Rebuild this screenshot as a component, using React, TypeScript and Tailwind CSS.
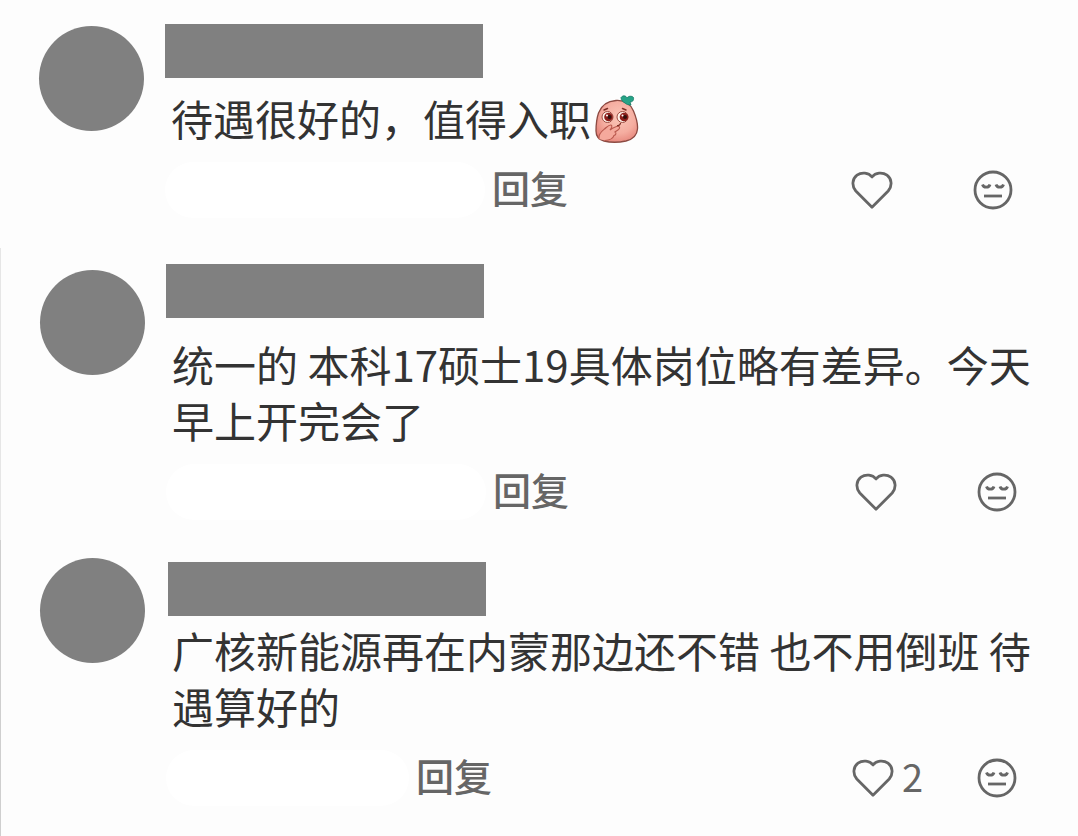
import { clsx } from "clsx";

type Comment = {
  id: number;
  text: string;
  sticker?: boolean;
  likes?: number;
  section: string;
  avatar: string;
  name: string;
  body: string;
  footer: string;
  meta: string;
  like: string;
};

const comments: Comment[] = [
  {
    id: 1,
    text: "待遇很好的，值得入职",
    sticker: true,
    section: "pt-6 pb-[30px]",
    avatar: "mt-0.5",
    name: "mt-0",
    body: "mt-3",
    footer: "mt-4 pr-7",
    meta: "w-[320px]",
    like: "w-[122px]",
  },
  {
    id: 2,
    text: "统一的 本科17硕士19具体岗位略有差异。今天早上开完会了",
    section: "border-l border-[#e6e6e6] pt-4 pb-5",
    avatar: "mt-1.5",
    name: "mt-0",
    body: "mt-[18px]",
    footer: "mt-4 pr-6",
    meta: "w-[320px]",
    like: "w-[122px]",
  },
  {
    id: 3,
    text: "广核新能源再在内蒙那边还不错 也不用倒班 待遇算好的",
    likes: 2,
    section: "border-l border-[#cfcfcf] pt-[18px] pb-[30px]",
    avatar: "mt-0",
    name: "mt-1 ml-0.5",
    body: "mt-1.5",
    footer: "mt-4 pr-6",
    meta: "w-[243px]",
    like: "w-[125px]",
  },
];

const HeartIcon = () => (
  <svg
    width="42"
    height="38"
    viewBox="0 0 42 38"
    fill="none"
    stroke="#666"
    strokeWidth="2.8"
    strokeLinejoin="round"
    aria-hidden="true"
  >
    <path d="M21 6C17.5 1.5 10.5 .9 6 4.2C1 8 .6 15.2 4.8 20L21 36.2L37.2 20C41.4 15.2 41 8 36 4.2C31.5 .9 24.5 1.5 21 6Z" />
  </svg>
);

const DislikeIcon = () => (
  <svg
    width="40"
    height="40"
    viewBox="0 0 40 40"
    fill="none"
    stroke="#666"
    strokeWidth="2.8"
    aria-hidden="true"
  >
    <circle cx="20" cy="20" r="18" />
    <path d="M9.5 14.5C10.5 18 16 18 17 14.5M23 14.5C24 18 29.5 18 30.5 14.5" />
    <path d="M11 26H29" />
  </svg>
);

// Sticker que acompaña al texto del comentario
const PeachSticker = () => (
  <svg
    className="ml-1 inline-block align-[-7px]"
    width="44"
    height="48"
    viewBox="0 0 44 48"
    role="img"
    aria-label="偷笑"
  >
    <defs>
      <radialGradient id="peach" cx="55%" cy="40%" r="65%">
        <stop offset="0" stopColor="#fac6b8" />
        <stop offset="0.6" stopColor="#f5ada0" />
        <stop offset="1" stopColor="#e58379" />
      </radialGradient>
    </defs>
    <path
      d="M21 5.5C29 5 35 8 38.5 16C41 22 43 28 42.5 34C42 41 37 44.500 31 46C24 47.500 15 47.500 9 46C3 44.500 1 41 1 36C1 30 1.500 24 3.500 18C6.500 10 13 6 21 5.500Z"
      fill="url(#peach)"
      stroke="#8c4a42"
      strokeWidth="1.3"
    />
    <path
      d="M30 8C28 7 26 5.500 26 2.500C28 0 31 .5 32 3C33 1 37 .5 38.500 2.500C39 6 37 7 35 7L36 10C33.500 10 31.500 9.500 30 8Z"
      fill="#25a387"
      stroke="#147863"
      strokeWidth="0.8"
    />
    <circle cx="12.500" cy="22" r="5.500" fill="#fff1e8" stroke="#9b4b40" />
    <circle cx="27.500" cy="22" r="5.500" fill="#fff1e8" stroke="#9b4b40" />
    <circle cx="13.500" cy="22" r="4.300" fill="#8d1f1b" />
    <circle cx="29" cy="22" r="4.300" fill="#8d1f1b" />
    <circle cx="14.500" cy="22" r="2" fill="#32100e" />
    <circle cx="30" cy="22" r="2" fill="#32100e" />
    <circle cx="12" cy="20.500" r="1" fill="#fff" />
    <circle cx="27.500" cy="20.500" r="1" fill="#fff" />
    <path
      d="M9 15L12.500 13.500M27.500 13.500L31 15"
      stroke="#7c2f26"
      strokeWidth="1.5"
      strokeLinecap="round"
    />
    <path
      d="M4 44C3 39 7 36 9.500 34C12 32 14 29.500 16 30C18 31 16 33.500 15 35C18 33 23 30 24.500 32C25.500 34 22 35.500 20 37C22 38 20.500 40 19 40.500C18 43.500 14 45.500 10 45.500"
      fill="#f5a99c"
      stroke="#b9584d"
      strokeWidth="1.1"
      strokeLinecap="round"
    />
    <path d="M22 30.500C24 31 25.500 29.500 25.500 28" fill="none" stroke="#7c2f26" strokeWidth="1.2" />
  </svg>
);

const CommentItem = ({ comment }: { comment: Comment }) => {
  return (
    <article className={clsx("flex items-start gap-[21px] pr-[37px] pl-[39px]", comment.section)}>
      <div className={clsx("size-[105px] shrink-0 rounded-full bg-[#808080]", comment.avatar)} />
      <div className="min-w-0 flex-1">
        <div className={clsx("h-[54px] w-[318px] bg-[#808080]", comment.name)} />
        <p className={clsx("pl-1.5 text-[42px] leading-14 text-[#333]", comment.body)}>
          {comment.text}
          {comment.sticker && <PeachSticker />}
        </p>
        <div className={clsx("flex h-14 items-center text-[38px] text-[#666]", comment.footer)}>
          <span className={clsx("h-14 shrink-0 rounded-full bg-white", comment.meta)} />
          <button type="button" className="ml-[7px] pb-2 font-medium">
            回复
          </button>
          <button
            type="button"
            aria-label="点赞"
            className={clsx("ml-auto flex items-center gap-2", comment.like)}
          >
            <HeartIcon />
            {comment.likes && <span className="pb-1 leading-none">{comment.likes}</span>}
          </button>
          <button type="button" aria-label="不喜欢">
            <DislikeIcon />
          </button>
        </div>
      </div>
    </article>
  );
};

const App = () => {
  return (
    <main
      lang="zh-CN"
      className="min-h-screen bg-[#fdfdfd] font-['Noto_Sans_CJK_SC',sans-serif]"
    >
      {comments.map((comment) => (
        <CommentItem key={comment.id} comment={comment} />
      ))}
    </main>
  );
};

export default App;
